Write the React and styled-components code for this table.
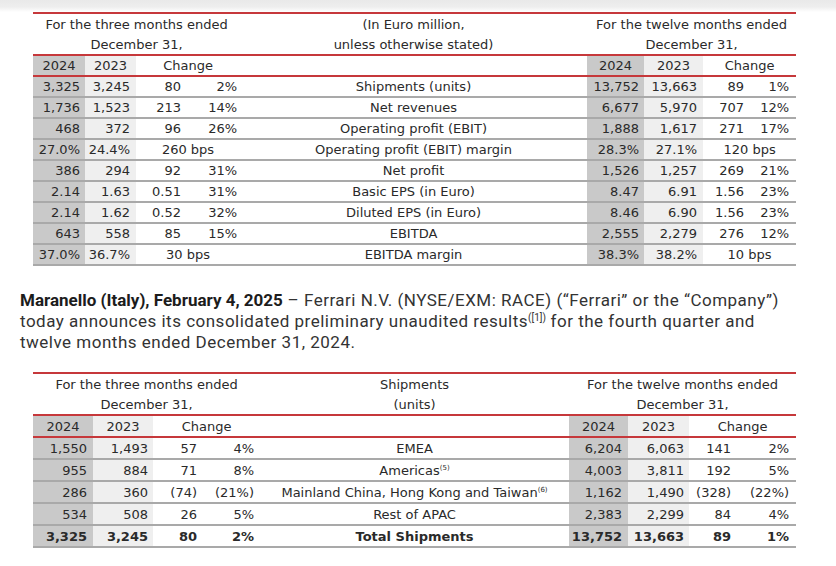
import React from 'react';
import styled, { createGlobalStyle } from 'styled-components';

const GlobalStyle = createGlobalStyle`
  body {
    margin: 0;
    background: #ffffff;
    font-family: "DejaVu Sans", sans-serif;
    color: #2b2b2b;
  }
  * {
    box-sizing: border-box;
  }
`;

const RED = '#c6383b';
const LINE = '#a9a9a9';

const Page = styled.div`
  width: 836px;
  min-height: 566px;
  background: #ffffff;
`;

const Shade = styled.div`
  height: 12px;
  background: linear-gradient(#e9e9e9 0, #eeeeee 7px, #ffffff 12px);
`;

const Table = styled.table`
  width: 763px;
  margin-left: 33px;
  border-collapse: separate;
  border-spacing: 0;
  table-layout: fixed;
  border-top: 2px solid ${RED};
  font-size: 13px;
  color: #2a2a2a;
`;

const HeadCell = styled.td`
  height: ${({ $rule }) => ($rule ? 22 : 20)}px;
  padding: 0;
  text-align: center;
  vertical-align: middle;
  white-space: nowrap;
  border-bottom: ${({ $rule }) => ($rule ? `2px solid ${RED}` : 'none')};
  line-height: 1;
`;

const YearCell = styled(HeadCell)`
  height: ${({ $h }) => $h}px;
  background: ${({ $shade }) =>
    $shade === 'dark' ? '#c9c9c9' : $shade === 'light' ? '#efefef' : 'transparent'};
`;

const Cell = styled.td`
  height: ${({ $h }) => $h}px;
  padding: 0 ${({ $pad }) => ($pad == null ? 6 : $pad)}px 0 0;
  text-align: ${({ $align }) => $align || 'right'};
  vertical-align: middle;
  white-space: nowrap;
  line-height: 1;
  border-bottom: 2px solid ${LINE};
  font-weight: ${({ $bold }) => ($bold ? 700 : 400)};
  background: ${({ $shade }) =>
    $shade === 'dark' ? '#c9c9c9' : $shade === 'light' ? '#efefef' : 'transparent'};
`;

const Label = styled(Cell)`
  padding: 0;
  text-align: center;
`;

const Sup = styled.sup`
  font-size: 7px;
  vertical-align: 5px;
  line-height: 0;
`;

const Lead = styled.p`
  margin: 24px 0 19px 20px;
  font-family: Roboto, "Liberation Sans", sans-serif;
  font-size: 17px;
  line-height: 21px;
  letter-spacing: 0.5px;
  color: #333333;
`;

const Strong = styled.span`
  font-weight: 700;
  letter-spacing: 0;
  color: #1c1c1c;
`;

const LeadSup = styled.sup`
  font-size: 10px;
  vertical-align: 6px;
  line-height: 0;
  letter-spacing: 0;
`;

const results = [
  ['3,325', '3,245', '80', '2%', 'Shipments (units)', '13,752', '13,663', '89', '1%'],
  ['1,736', '1,523', '213', '14%', 'Net revenues', '6,677', '5,970', '707', '12%'],
  ['468', '372', '96', '26%', 'Operating profit (EBIT)', '1,888', '1,617', '271', '17%'],
  ['27.0%', '24.4%', '260 bps', null, 'Operating profit (EBIT) margin', '28.3%', '27.1%', '120 bps', null],
  ['386', '294', '92', '31%', 'Net profit', '1,526', '1,257', '269', '21%'],
  ['2.14', '1.63', '0.51', '31%', 'Basic EPS (in Euro)', '8.47', '6.91', '1.56', '23%'],
  ['2.14', '1.62', '0.52', '32%', 'Diluted EPS (in Euro)', '8.46', '6.90', '1.56', '23%'],
  ['643', '558', '85', '15%', 'EBITDA', '2,555', '2,279', '276', '12%'],
  ['37.0%', '36.7%', '30 bps', null, 'EBITDA margin', '38.3%', '38.2%', '10 bps', null]
];

const shipments = [
  ['1,550', '1,493', '57', '4%', 'EMEA', '6,204', '6,063', '141', '2%'],
  ['955', '884', '71', '8%', <>Americas<Sup>(5)</Sup></>, '4,003', '3,811', '192', '5%'],
  ['286', '360', '(74)', '(21%)', <>Mainland China, Hong Kong and Taiwan<Sup>(6)</Sup></>, '1,162', '1,490', '(328)', '(22%)'],
  ['534', '508', '26', '5%', 'Rest of APAC', '2,383', '2,299', '84', '4%'],
  ['3,325', '3,245', '80', '2%', 'Total Shipments', '13,752', '13,663', '89', '1%']
];

const layouts = {
  results: {
    cols: [52, 51, 51, 53, 347, 57, 59, 47, 46],
    pads: [5, 6, 6, 3, 0, 5, 6, 6, 7],
    yearH: 21,
    rowH: 21
  },
  shipments: {
    cols: [60, 60, 50, 57, 309, 59, 61, 48, 59],
    pads: [6, 5, 6, 6, 0, 6, 5, 6, 7],
    yearH: 22,
    rowH: 22
  }
};

const DataTable = ({ layout, middle, rows, boldLast }) => {
  const { cols, pads, yearH, rowH } = layouts[layout];
  const shadeOf = (i) => (i === 0 || i === 5 ? 'dark' : i === 1 || i === 6 ? 'light' : null);

  const renderRow = (row, r) => {
    const bold = boldLast && r === rows.length - 1;
    const cells = [];
    row.forEach((v, i) => {
      if (v === null) return;
      if (i === 4) {
        cells.push(
          <Label key={i} $h={rowH} $bold={bold}>
            {v}
          </Label>
        );
        return;
      }
      const spans = row[i + 1] === null && (i === 2 || i === 7);
      cells.push(
        <Cell
          key={i}
          $h={rowH}
          $bold={bold}
          $shade={shadeOf(i)}
          $pad={spans ? 0 : pads[i]}
          $align={spans ? 'center' : 'right'}
          colSpan={spans ? 2 : 1}
        >
          {v}
        </Cell>
      );
    });
    return <tr key={r}>{cells}</tr>;
  };

  return (
    <Table>
      <colgroup>
        {cols.map((w, i) => (
          <col key={i} style={{ width: w }} />
        ))}
      </colgroup>
      <tbody>
        <tr>
          <HeadCell colSpan={4}>For the three months ended</HeadCell>
          <HeadCell>{middle[0]}</HeadCell>
          <HeadCell colSpan={4}>For the twelve months ended</HeadCell>
        </tr>
        <tr>
          <HeadCell colSpan={4} $rule>December 31,</HeadCell>
          <HeadCell $rule>{middle[1]}</HeadCell>
          <HeadCell colSpan={4} $rule>December 31,</HeadCell>
        </tr>
        <tr>
          <YearCell $h={yearH} $rule $shade="dark">2024</YearCell>
          <YearCell $h={yearH} $rule $shade="light">2023</YearCell>
          <YearCell $h={yearH} $rule colSpan={2}>Change</YearCell>
          <YearCell $h={yearH} $rule />
          <YearCell $h={yearH} $rule $shade="dark">2024</YearCell>
          <YearCell $h={yearH} $rule $shade="light">2023</YearCell>
          <YearCell $h={yearH} $rule colSpan={2}>Change</YearCell>
        </tr>
        {rows.map(renderRow)}
      </tbody>
    </Table>
  );
};

const App = () => (
  <Page>
    <GlobalStyle />
    <Shade />
    <DataTable layout="results" middle={['(In Euro million,', 'unless otherwise stated)']} rows={results} />
    <Lead>
      <Strong>Maranello (Italy), February 4, 2025</Strong> – Ferrari N.V. (NYSE/EXM: RACE) (“Ferrari” or the “Company”)
      <br />
      today announces its consolidated preliminary unaudited results<LeadSup>([1])</LeadSup> for the fourth quarter and
      <br />
      twelve months ended December 31, 2024.
    </Lead>
    <DataTable layout="shipments" middle={['Shipments', '(units)']} rows={shipments} boldLast />
  </Page>
);

export default App;
